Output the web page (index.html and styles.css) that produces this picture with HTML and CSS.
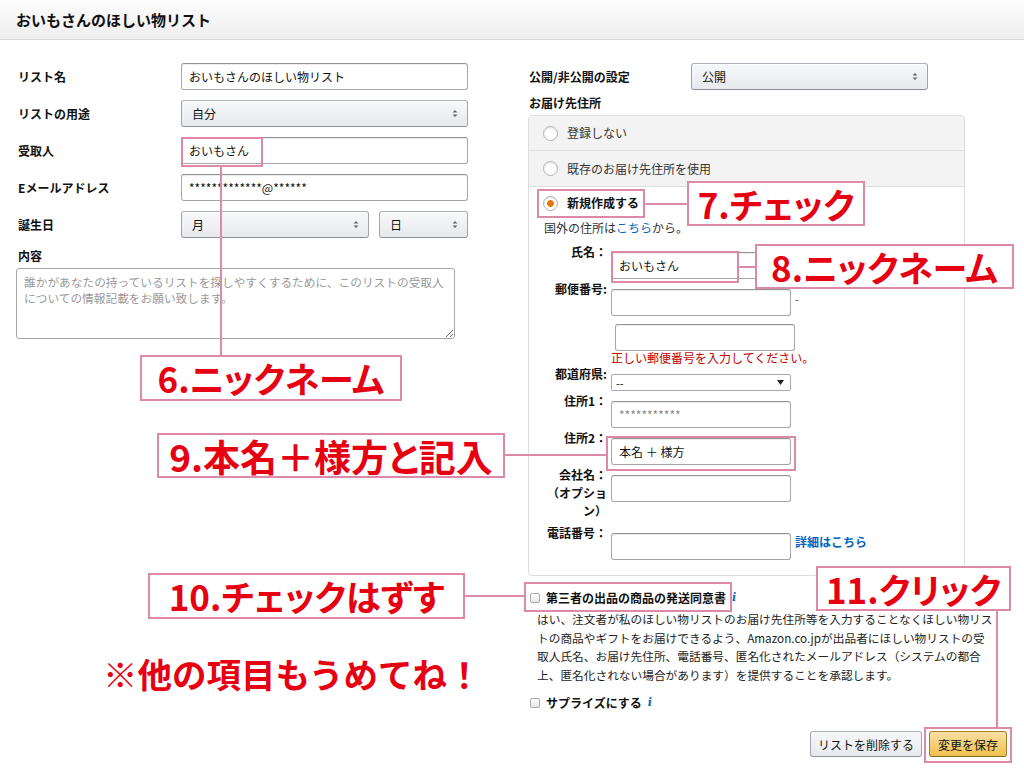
FILE: index.html
```html
<!doctype html>
<html lang="ja">
  <head>
    <meta charset="UTF-8" />
    <meta name="viewport" content="width=device-width, initial-scale=1.0" />
    <title>おいもさんのほしい物リスト</title>
    <link rel="stylesheet" href="styles.css">
  </head>
  <body>
    <header class="list-head">
      <h1>おいもさんのほしい物リスト</h1>
    </header>

    <main class="list-form">
      <!-- 左: リストの基本情報 -->
      <section class="col-left">
        <div class="form-grid">
          <label class="form-label">リスト名</label>
          <input class="field" type="text" value="おいもさんのほしい物リスト" />

          <label class="form-label">リストの用途</label>
          <span class="dropdown">
            <span>自分</span>
            <svg class="updown" width="6" height="9" viewBox="0 0 6 9"><path d="M0.5 3.5L3 1L5.5 3.5Z M0.5 5.5L3 8L5.5 5.5Z" fill="#666"/></svg>
          </span>

          <label class="form-label">受取人</label>
          <input class="field" type="text" value="おいもさん" />

          <label class="form-label">Eメールアドレス</label>
          <input class="field" type="text" value="*************@******" />

          <label class="form-label">誕生日</label>
          <div class="birth">
            <span class="dropdown month">
              <span>月</span>
              <svg class="updown" width="6" height="9" viewBox="0 0 6 9"><path d="M0.5 3.5L3 1L5.5 3.5Z M0.5 5.5L3 8L5.5 5.5Z" fill="#666"/></svg>
            </span>
            <span class="dropdown day">
              <span>日</span>
              <svg class="updown" width="6" height="9" viewBox="0 0 6 9"><path d="M0.5 3.5L3 1L5.5 3.5Z M0.5 5.5L3 8L5.5 5.5Z" fill="#666"/></svg>
            </span>
          </div>
        </div>

        <label class="memo-label">内容</label>
        <textarea class="memo" placeholder="誰かがあなたの持っているリストを探しやすくするために、このリストの受取人についての情報記載をお願い致します。"></textarea>
      </section>

      <!-- 右: 公開設定とお届け先 -->
      <section class="col-right">
        <div class="privacy-row">
          <label class="form-label">公開/非公開の設定</label>
          <span class="dropdown">
            <span>公開</span>
            <svg class="updown" width="6" height="9" viewBox="0 0 6 9"><path d="M0.5 3.5L3 1L5.5 3.5Z M0.5 5.5L3 8L5.5 5.5Z" fill="#666"/></svg>
          </span>
        </div>

        <div class="addr-title">お届け先住所</div>
        <div class="addr-box">
          <div class="addr-opt"><span class="radio"></span>登録しない</div>
          <div class="addr-opt"><span class="radio"></span>既存のお届け先住所を使用</div>

          <div class="addr-new">
            <div class="addr-new-head"><span class="radio on"></span>新規作成する</div>
            <p class="overseas">国外の住所は<a href="#">こちら</a>から。</p>

            <div class="addr-row">
              <label class="addr-label">氏名：</label>
              <div class="addr-field"><input class="field" type="text" value="おいもさん" /></div>
            </div>

            <div class="addr-row">
              <label class="addr-label">郵便番号:</label>
              <div class="addr-field">
                <input class="field" type="text" />
                <input class="field zip2" type="text" />
                <div class="addr-error">正しい郵便番号を入力してください。</div>
              </div>
              <span class="addr-extra dash">-</span>
            </div>

            <div class="addr-row">
              <label class="addr-label">都道府県:</label>
              <div class="addr-field">
                <span class="pref-select">
                  <span>--</span>
                  <svg width="7" height="5" viewBox="0 0 7 5"><path d="M0 0H7L3.5 5Z" fill="#222"/></svg>
                </span>
              </div>
            </div>

            <div class="addr-row">
              <label class="addr-label">住所1：</label>
              <div class="addr-field"><input class="field masked" type="text" value="***********" /></div>
            </div>

            <div class="addr-row">
              <label class="addr-label">住所2：</label>
              <div class="addr-field"><input class="field" type="text" value="本名 ＋ 様方" /></div>
            </div>

            <div class="addr-row company">
              <label class="addr-label">会社名：（オプション）</label>
              <div class="addr-field"><input class="field" type="text" /></div>
            </div>

            <div class="addr-row">
              <label class="addr-label">電話番号：</label>
              <div class="addr-field"><input class="field" type="text" /></div>
              <a class="addr-extra detail-link" href="#">詳細はこちら</a>
            </div>
          </div>
        </div>

        <div class="check-row consent">
          <span class="checkbox"></span>第三者の出品の商品の発送同意書<i class="info">i</i>
        </div>
        <p class="consent-text">はい、注文者が私のほしい物リストのお届け先住所等を入力することなくほしい物リス<br>トの商品やギフトをお届けできるよう、Amazon.co.jpが出品者にほしい物リストの受<br>取人氏名、お届け先住所、電話番号、匿名化されたメールアドレス（システムの都合<br>上、匿名化されない場合があります）を提供することを承認します。</p>

        <div class="check-row surprise">
          <span class="checkbox"></span>サプライズにする<i class="info">i</i>
        </div>

        <div class="actions">
          <button class="btn">リストを削除する</button>
          <button class="btn btn-save">変更を保存</button>
        </div>
      </section>
    </main>

    <!-- 説明用の書き込み -->
    <div class="notes">
      <div class="hl hl-recipient"></div>
      <div class="line line-6"></div>
      <div class="note note-6">6.ニックネーム</div>

      <div class="hl hl-new"></div>
      <div class="line line-7"></div>
      <div class="note note-7">7.チェック</div>

      <div class="hl hl-name"></div>
      <div class="line line-8"></div>
      <div class="note note-8">8.ニックネーム</div>

      <div class="hl hl-addr2"></div>
      <div class="line line-9"></div>
      <div class="note note-9">9.本名＋様方と記入</div>

      <div class="hl hl-consent"></div>
      <div class="line line-10"></div>
      <div class="note note-10">10.チェックはずす</div>

      <div class="hl hl-save"></div>
      <div class="line line-11"></div>
      <div class="note note-11">11.クリック</div>

      <div class="remark">※他の項目もうめてね！</div>
    </div>
  </body>
</html>
```

FILE: styles.css
```css
* {
  box-sizing: border-box;
}

body {
  margin: 0;
  width: 1024px;
  height: 769px;
  overflow: hidden;
  position: relative;
  font-family: "Noto Sans CJK JP", "Noto Sans", sans-serif;
  font-size: 12px;
  line-height: 18px;
  color: #111;
  background: #fff;
}

a {
  color: #0066c0;
  text-decoration: none;
}

/* ヘッダー */
.list-head {
  height: 40px;
  padding-left: 16px;
  background: linear-gradient(#fdfdfd, #eeeeee);
  border-bottom: 1px solid #d6d6d6;
}

.list-head h1 {
  margin: 0;
  font-size: 15px;
  line-height: 39px;
  font-weight: bold;
}

.list-form {
  display: flex;
  padding: 23px 0 0 16px;
}

.col-left {
  width: 452px;
}

.col-right {
  width: 479px;
  margin-left: 60px;
}

/* 入力欄 */
.form-grid {
  display: grid;
  grid-template-columns: 165px 287px;
  row-gap: 10px;
  align-items: center;
}

.form-label {
  font-weight: bold;
  padding-left: 2px;
}

.field {
  display: block;
  width: 100%;
  height: 27px;
  padding: 0 7px;
  border: 1px solid #a6a6a6;
  border-top-color: #949494;
  border-radius: 3px;
  box-shadow: 0 1px 0 rgba(0, 0, 0, 0.07) inset;
  font: inherit;
  color: #111;
  background: #fff;
}

.field.masked {
  color: #888;
}

.dropdown {
  display: flex;
  align-items: center;
  justify-content: space-between;
  height: 27px;
  padding: 0 9px 0 10px;
  border: 1px solid #adb1b8;
  border-color: #adb1b8 #a2a6ac #8d9096;
  border-radius: 3px;
  background: linear-gradient(#f7f8fa, #e7e9ec);
  box-shadow: 0 1px 0 rgba(255, 255, 255, 0.6) inset;
}

.birth {
  display: flex;
  gap: 10px;
}

.birth .month {
  flex: 1;
}

.birth .day {
  width: 89px;
}

.memo-label {
  display: block;
  margin: 9px 0 3px 2px;
  font-weight: bold;
}

.memo {
  display: block;
  width: 439px;
  height: 71px;
  padding: 5px 7px;
  border: 1px solid #a6a6a6;
  border-radius: 3px;
  font-family: inherit;
  font-size: 11.7px;
  line-height: 16px;
  resize: both;
}

.memo::placeholder {
  color: #999;
}

/* 右カラム */
.privacy-row {
  display: grid;
  grid-template-columns: 163px 237px;
  align-items: center;
}

.privacy-row .form-label {
  padding-left: 1px;
}

.addr-title {
  margin-top: 4px;
  padding-left: 1px;
  font-weight: bold;
}

.addr-box {
  width: 437px;
  margin-top: 3px;
  border: 1px solid #ddd;
  border-radius: 4px;
}

.addr-opt {
  display: flex;
  align-items: center;
  height: 36px;
  padding-left: 14px;
  background: #f3f3f3;
  border-bottom: 1px solid #ddd;
  color: #333;
}

.addr-opt:first-child {
  height: 35px;
  border-radius: 4px 4px 0 0;
}

.radio {
  width: 15px;
  height: 15px;
  margin-right: 9px;
  border: 1px solid #adb1b8;
  border-radius: 50%;
  background: #fff;
  box-shadow: 0 1px 2px rgba(0, 0, 0, 0.12) inset;
}

.radio.on {
  background: radial-gradient(circle, #e77600 3px, #fff 3.8px);
}

.addr-new {
  padding: 7px 14px 14px;
}

.addr-new-head {
  display: flex;
  align-items: center;
  font-weight: bold;
}

.overseas {
  margin: 7px 0 6px 1px;
  color: #333;
}

.addr-row {
  display: grid;
  grid-template-columns: 64px 180px auto;
  column-gap: 4px;
  align-items: start;
  margin-bottom: 1px;
}

.addr-row.company {
  margin-bottom: 4px;
}

.addr-label {
  padding-left: 4px;
  text-align: right;
  font-weight: bold;
}

.addr-field {
  padding-top: 9px;
}

.addr-extra {
  padding-top: 9px;
}

.dash {
  padding-top: 14px;
  line-height: 10px;
  font-size: 10px;
}

.detail-link {
  font-weight: bold;
}

.zip2 {
  width: 180px;
  margin: 8px 0 0 4px;
}

.addr-error {
  line-height: 13px;
  color: #c40000;
  white-space: nowrap;
}

.pref-select {
  display: flex;
  align-items: center;
  justify-content: space-between;
  height: 17px;
  padding: 0 6px 0 4px;
  border: 1px solid #a9a9a9;
  border-radius: 2px;
  background: #fff;
  font-size: 11px;
}

/* 同意・サプライズ */
.check-row {
  display: flex;
  align-items: center;
  padding-left: 2px;
  font-weight: bold;
}

.consent {
  margin-top: 13px;
}

.surprise {
  margin-top: 10px;
}

.checkbox {
  width: 10px;
  height: 10px;
  margin-right: 6px;
  border: 1px solid #aaa;
  border-radius: 2px;
  background: linear-gradient(#fff, #e6e6e6);
}

.info {
  margin-left: 6px;
  font-family: "DejaVu Serif", serif;
  font-size: 11px;
  color: #0066c0;
}

.consent-text {
  margin: 3px 0 0;
  padding-left: 9px;
  font-size: 11.7px;
  line-height: 18.5px;
  white-space: nowrap;
  color: #222;
}

.actions {
  display: flex;
  justify-content: flex-end;
  gap: 7px;
  margin-top: 19px;
}

.btn {
  height: 26px;
  padding: 0 7px;
  border: 1px solid #adb1b8;
  border-color: #adb1b8 #a2a6ac #8d9096;
  border-radius: 3px;
  background: linear-gradient(#f7f8fa, #e7e9ec);
  font-family: inherit;
  font-size: 12px;
  color: #111;
}

.btn-save {
  padding: 0 8px;
  border-color: #a88734 #9c7e31 #846a29;
  background: linear-gradient(#f7dfa5, #f0c14b);
}

/* 説明用の書き込み */
.notes {
  position: absolute;
  left: 0;
  top: 0;
  width: 1024px;
  height: 769px;
  pointer-events: none;
}

.hl,
.note,
.line {
  position: absolute;
}

.hl {
  border: 2px solid #dc8aa8;
}

.line {
  background: #dc8aa8;
}

.note {
  display: flex;
  align-items: center;
  justify-content: center;
  border: 2px solid #dc8aa8;
  background: #fff;
  color: #e60012;
  font-size: 35px;
  line-height: 40px;
  font-weight: bold;
  font-feature-settings: "palt";
  white-space: nowrap;
}

.hl-recipient { left: 181px; top: 137px; width: 82px; height: 30px; }
.line-6 { left: 220px; top: 167px; width: 2px; height: 188px; }
.note-6 { left: 140px; top: 355px; width: 262px; height: 46px; }

.hl-new { left: 537px; top: 189px; width: 108px; height: 29px; }
.line-7 { left: 645px; top: 203px; width: 42px; height: 2px; }
.note-7 { left: 687px; top: 181px; width: 178px; height: 45px; }

.hl-name { left: 611px; top: 251px; width: 128px; height: 32px; }
.line-8 { left: 739px; top: 266px; width: 16px; height: 2px; }
.note-8 { left: 755px; top: 244px; width: 259px; height: 45px; }

.hl-addr2 { left: 606px; top: 436px; width: 190px; height: 35px; }
.line-9 { left: 505px; top: 454px; width: 101px; height: 2px; }
.note-9 { left: 157px; top: 433px; width: 348px; height: 45px; font-size: 37px; }

.hl-consent { left: 524px; top: 582px; width: 208px; height: 30px; }
.line-10 { left: 465px; top: 595px; width: 59px; height: 2px; }
.note-10 { left: 148px; top: 573px; width: 317px; height: 46px; }

.hl-save { left: 924px; top: 727px; width: 88px; height: 36px; }
.line-11 { left: 996px; top: 611px; width: 2px; height: 116px; }
.note-11 { left: 816px; top: 566px; width: 195px; height: 45px; }

.remark {
  position: absolute;
  left: 103px;
  top: 651px;
  color: #e60012;
  font-size: 34.5px;
  line-height: 44px;
  font-weight: bold;
  white-space: nowrap;
}
```
